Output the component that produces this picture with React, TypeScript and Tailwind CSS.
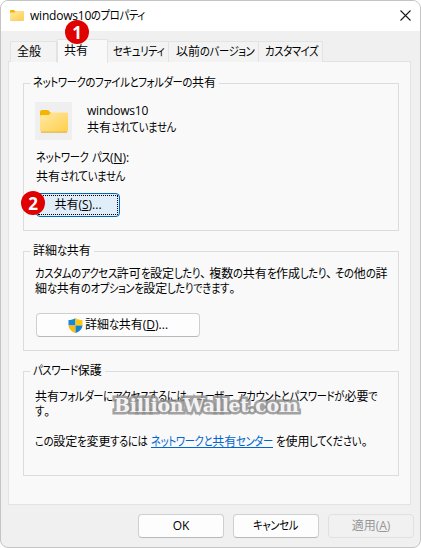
import { useLayoutEffect, useRef } from "react";
import type { ReactNode } from "react";

const KANA = /([\u3040-\u30ff]+|\u3001|\u3002)/;
const KANA_SCALE = 0.86;

// UI fonts draw kana narrower than kanji, so each kana run is condensed
function Kana({ text }: { text: string }) {
  const ref = useRef<HTMLSpanElement>(null);

  useLayoutEffect(() => {
    const el = ref.current;
    if (!el) return;
    el.style.transform = "none";
    const { width } = el.getBoundingClientRect();
    el.style.transform = `scaleX(${KANA_SCALE})`;
    el.style.marginRight = `${-width * (1 - KANA_SCALE)}px`;
  }, [text]);

  return (
    <span ref={ref} className="inline-block origin-left tracking-[-0.4px]">
      {text}
    </span>
  );
}

function Ja({ children }: { children: string }) {
  return (
    <>
      {children.split(KANA).map((part, i) => {
        if (i % 2 === 0) return part;
        if (part === "、" || part === "。")
          return (
            <span key={i} className="inline-block w-[9px]">
              {part}
            </span>
          );
        return <Kana key={i} text={part} />;
      })}
    </>
  );
}

function FolderIcon({ className }: { className: string }) {
  return (
    <svg className={className} viewBox="0 0 28 23" preserveAspectRatio="none">
      <defs>
        <linearGradient id="folder" x1="0" y1="0" x2="1" y2="1">
          <stop offset="0" stopColor="#ffe9a6" />
          <stop offset="1" stopColor="#ffcf4b" />
        </linearGradient>
      </defs>
      <path d="M0 2Q0 0 2 0H8L11 3H26Q28 3 28 5V12H0Z" fill="#f5b400" />
      <path
        d="M0 6.500Q0 5 1.500 5H8.500L11.500 2.500H26.500Q28 2.500 28 4.500V20.500Q28 22 26.500 22H1.500Q0 22 0 20.500Z"
        fill="url(#folder)"
      />
      <path d="M1 22.200H27" stroke="#dca52b" strokeWidth="0.900" />
    </svg>
  );
}

function ShieldIcon() {
  return (
    <svg className="h-[15px] w-[15px] shrink-0" viewBox="0 0 15 15">
      <path d="M7.500 0C5.500 1.500 3 2 0.500 2V7.500H7.500Z" fill="#1788d8" />
      <path d="M7.500 0C9.500 1.500 12 2 14.500 2V7.500H7.500Z" fill="#ffc80a" />
      <path d="M0.500 7.500C0.800 11 3.500 13.600 7.500 15V7.500Z" fill="#fdbb0b" />
      <path d="M14.500 7.500C14.200 11 11.500 13.600 7.500 15V7.500Z" fill="#1583d2" />
    </svg>
  );
}

function Badge({ n, className }: { n: number; className: string }) {
  return (
    <span
      className={`absolute z-10 flex h-6 w-6 items-center justify-center rounded-full bg-[#df0000] font-['Open_Sans',sans-serif] text-[17px] leading-none font-bold text-white ${className}`}
    >
      {n}
    </span>
  );
}

function Group({
  title,
  className,
  children,
}: {
  title: string;
  className: string;
  children: ReactNode;
}) {
  return (
    <fieldset className={`w-[376px] border border-[#dcdcdc] pl-3 ${className}`}>
      <legend className="-ml-[6px] px-[3px] leading-4 whitespace-nowrap">
        <Ja>{title}</Ja>
      </legend>
      {children}
    </fieldset>
  );
}

const TABS = [
  { label: "全般", className: "w-[47px] pl-[6px]" },
  { label: "共有", active: true, className: "w-[51px] pl-[6px]" },
  { label: "セキュリティ", className: "w-[61px] pl-[5px]" },
  { label: "以前のバージョン", className: "w-[90px] pl-[7px]" },
  { label: "カスタマイズ", className: "w-[64px] pl-[6px]" },
];

const BUTTON =
  "flex h-6 items-center justify-center rounded-[4px] border border-[#cfcfcf] border-b-[#b9b9b9] bg-[#fdfdfd]";

function App() {
  return (
    <div className="h-[548px] w-[421px] bg-white">
      <div className="relative flex h-full flex-col overflow-hidden rounded-[8px] border border-[#c4c4c4] bg-[#f0f0f0] font-['Open_Sans','Noto_Sans_CJK_JP',sans-serif] text-[12px] whitespace-nowrap text-black [font-feature-settings:'palt']">
        <header className="flex h-[30px] shrink-0 items-center bg-white pr-[9px] pl-[9px]">
          <FolderIcon className="-mt-[2px] h-[11px] w-[14px]" />
          <h1 className="ml-[6px] flex-1 tracking-[-0.2px]">
            <Ja>windows10のプロパティ</Ja>
          </h1>
          <button aria-label="閉じる">
            <svg className="-mt-[2px] h-[11px] w-[11px]" viewBox="0 0 11 11">
              <path
                d="M0.500 0.500L10.500 10.500M10.500 0.500L0.500 10.500"
                stroke="#1a1a1a"
                strokeWidth="1.100"
              />
            </svg>
          </button>
        </header>
        <Badge n={1} className="top-[19px] left-[64px]" />

        <nav className="z-1 mt-[8px] ml-[9px] flex h-[23px] items-end">
          {TABS.map((tab) => (
            <button
              key={tab.label}
              className={
                tab.active
                  ? `-mb-px h-[24px] border border-b-0 border-[#e3e3e3] bg-[#f9f9f9] pb-[2px] text-left ${tab.className}`
                  : `h-[21px] border border-b-0 border-l-0 border-[#e3e3e3] bg-[#f3f3f3] text-left first:border-l ${tab.className}`
              }
            >
              <Ja>{tab.label}</Ja>
            </button>
          ))}
        </nav>

        <main className="-mt-px ml-[7px] h-[444px] w-[403px] shrink-0 border border-[#e3e3e3] bg-[#f9f9f9] pt-[13px] pl-[14px]">
          <Group title="ネットワークのファイルとフォルダーの共有" className="h-[156px]">
            <div className="mt-[11px] -ml-px flex">
              <div className="flex h-[38px] w-[37px] items-center justify-center bg-[#efefef]">
                <FolderIcon className="h-[23px] w-[28px]" />
              </div>
              <div className="ml-[15px] leading-[17px]">
                <p className="tracking-[-0.2px]">windows10</p>
                <p>
                  <Ja>共有されていません</Ja>
                </p>
              </div>
            </div>
            <p className="mt-[8px] leading-[19px]">
              <Ja>ネットワーク</Ja> <Ja>パス</Ja>(<u>N</u>):
            </p>
            <p className="leading-[19px]">
              <Ja>共有されていません</Ja>
            </p>
            <button className="relative mt-[7px] flex h-6 w-[84px] items-center justify-center rounded-[4px] border border-[#0067c0] bg-[#e0eef9]">
              <span className="absolute inset-[1px] border border-dotted border-black" />
              共有(<u>S</u>)...
              <Badge n={2} className="-top-[3px] -left-[16px]" />
            </button>
          </Group>

          <Group title="詳細な共有" className="mt-[12px] h-[108px]">
            <p className="mt-[7px] -ml-px leading-[15px]">
              <Ja>カスタムのアクセス許可を設定したり、複数の共有を作成したり、その他の詳</Ja>
              <br />
              <Ja>細な共有のオプションを設定したりできます。</Ja>
            </p>
            <button className={`mt-[17px] w-[164px] gap-[2px] ${BUTTON}`}>
              <ShieldIcon />
              <span>
                <Ja>詳細な共有</Ja>(<u>D</u>)...
              </span>
            </button>
          </Group>

          <Group title="パスワード保護" className="mt-[12px] h-[113px]">
            <div className="relative mt-[10px] -ml-px leading-[15px]">
              <p>
                <Ja>共有フォルダーにアクセスするには、ユーザー アカウントとパスワードが必要で</Ja>
                <br />
                <Ja>す。</Ja>
              </p>
              <span className="absolute top-[5px] left-[79px] font-['DejaVu_Serif',serif] text-[19px] leading-[22px] font-bold tracking-[-0.3px] text-[#f3f3f3] [paint-order:stroke_fill] [-webkit-text-stroke:5px_#8f8f8fd0]">
                BillionWallet.com
              </span>
            </div>
            <p className="mt-[14px] -ml-px leading-[17px]">
              <Ja>この設定を変更するには</Ja>{" "}
              <a className="inline-block h-[15px] border-b border-[#0066cc] align-top text-[#0066cc]">
                <Ja>ネットワークと共有センター</Ja>
              </a>{" "}
              <Ja>を使用してください。</Ja>
            </p>
          </Group>
        </main>

        <footer className="mt-[9px] flex gap-[9px] pl-[137px]">
          <button className={`w-[86px] ${BUTTON}`}>OK</button>
          <button className={`w-[86px] ${BUTTON}`}>
            <Ja>キャンセル</Ja>
          </button>
          <button className="flex h-6 w-[86px] items-center justify-center rounded-[4px] border border-[#e0e0e0] bg-[#f1f1f1] text-[#969696]">
            適用(<u>A</u>)
          </button>
        </footer>
      </div>
    </div>
  );
}

export default App;
